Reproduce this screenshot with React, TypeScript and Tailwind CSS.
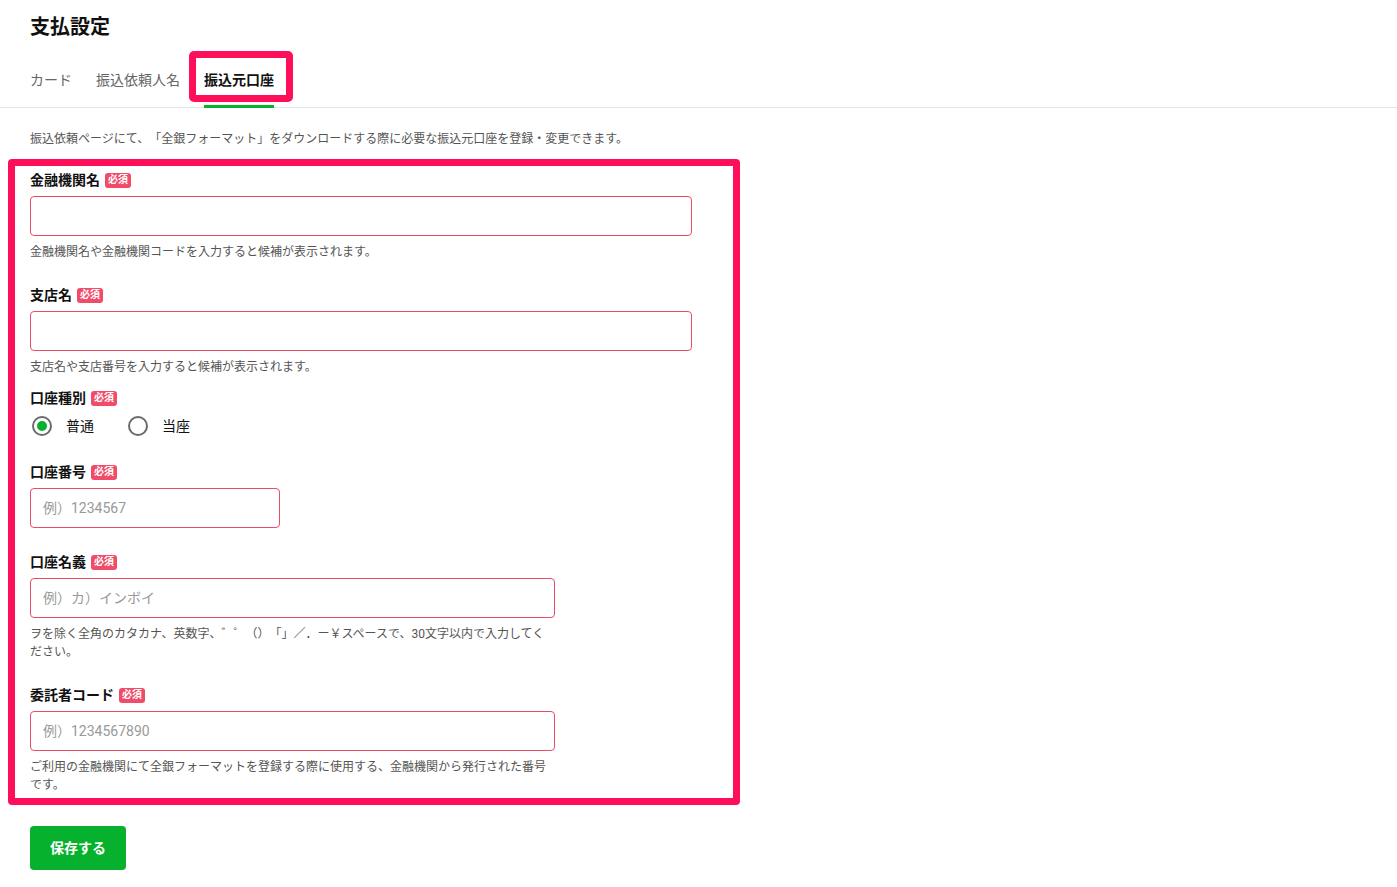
// Payment settings — bank account (振込元口座) tab.
// The two pink frames are review annotations from the screenshot, kept as-is.
import type { ReactNode } from "react";
import { useState } from "react";

const FONT = "font-['Roboto','Noto_Sans_CJK_JP',sans-serif] [text-spacing-trim:space-all]";

function Required(): ReactNode {
  return (
    <span className="inline-flex h-[15px] items-center rounded-[3px] bg-[#f04b68] px-[3px] text-[10px] font-bold leading-none text-white">
      必須
    </span>
  );
}

function FieldLabel({ children }: { children: ReactNode }): ReactNode {
  return (
    <div className="flex h-5 items-center gap-[5px]">
      <span className="text-sm font-bold leading-5 text-[#111]">{children}</span>
      <Required />
    </div>
  );
}

function TextInput({
  placeholder,
  width,
}: {
  placeholder?: string;
  width: string;
}): ReactNode {
  return (
    <input
      type="text"
      placeholder={placeholder}
      className={`mt-[6px] h-10 ${width} rounded-[4px] border border-[#ec4b66] bg-white px-3 text-sm text-[#111] outline-none placeholder:text-[#999]`}
    />
  );
}

function Help({ children, width }: { children: ReactNode; width?: string }): ReactNode {
  return (
    <p className={`mt-[7px] text-xs leading-[18px] text-[#555] ${width ?? ""}`}>
      {children}
    </p>
  );
}

function Radio({
  label,
  checked,
  onSelect,
}: {
  label: string;
  checked: boolean;
  onSelect: () => void;
}): ReactNode {
  return (
    <label className="flex cursor-pointer items-center gap-[14px]" onClick={onSelect}>
      <span className="ml-[2px] flex h-5 w-5 items-center justify-center rounded-full border-2 border-[#6b6b6b]">
        {checked ? <span className="h-[10px] w-[10px] rounded-full bg-[#06b22d]" /> : null}
      </span>
      <span className="text-sm leading-6 text-[#111]">{label}</span>
    </label>
  );
}

export default function App(): ReactNode {
  const [kind, setKind] = useState<"futsu" | "toza">("futsu");

  return (
    <div className={`min-h-screen bg-white ${FONT}`}>
      <h1 className="px-[30px] pt-[13px] text-xl font-bold leading-7 text-[#111]">支払設定</h1>

      <nav className="mt-[29px] flex gap-6 border-b border-[#e5e5e5] px-[30px]">
        <span className="-mb-px border-b-[3px] border-transparent pb-[15px] text-sm leading-5 text-[#666]">
          カード
        </span>
        <span className="-mb-px border-b-[3px] border-transparent pb-[15px] text-sm leading-5 text-[#666]">
          振込依頼人名
        </span>
        <span className="relative -mb-px border-b-[3px] border-[#06b22d] pb-[15px] text-sm font-bold leading-5 text-[#111]">
          振込元口座
          <span className="pointer-events-none absolute -top-[19px] -left-[15px] h-[51px] w-[104px] rounded-[5px] border-[7px] border-[#ff0f5a]" />
        </span>
      </nav>

      <p className="mt-[22px] px-[30px] text-xs leading-[18px] text-[#555]">
        振込依頼ページにて、「全銀フォーマット」をダウンロードする際に必要な振込元口座を登録・変更できます。
      </p>

      <section className="mt-[11px] ml-2 flex w-[732px] flex-col rounded-[4px] border-[7px] border-[#ff0f5a] pt-1 pr-4 pb-1 pl-[15px]">
        <FieldLabel>金融機関名</FieldLabel>
        <TextInput width="w-[662px]" />
        <Help>金融機関名や金融機関コードを入力すると候補が表示されます。</Help>

        <div className="mt-[24px]">
          <FieldLabel>支店名</FieldLabel>
        </div>
        <TextInput width="w-[662px]" />
        <Help>支店名や支店番号を入力すると候補が表示されます。</Help>

        <div className="mt-[12px]">
          <FieldLabel>口座種別</FieldLabel>
        </div>
        <div className="mt-[6px] flex h-6 items-center gap-8">
          <Radio label="普通" checked={kind === "futsu"} onSelect={() => setKind("futsu")} />
          <Radio label="当座" checked={kind === "toza"} onSelect={() => setKind("toza")} />
        </div>

        <div className="mt-6">
          <FieldLabel>口座番号</FieldLabel>
        </div>
        <TextInput width="w-[250px]" placeholder="例）1234567" />

        <div className="mt-6">
          <FieldLabel>口座名義</FieldLabel>
        </div>
        <TextInput width="w-[525px]" placeholder="例）カ）インボイ" />
        <Help width="w-[525px]">
          ヲを除く全角のカタカナ、英数字、゛゜（）「」／．ー￥スペースで、30文字以内で入力してください。
        </Help>

        <div className="mt-[24px]">
          <FieldLabel>委託者コード</FieldLabel>
        </div>
        <TextInput width="w-[525px]" placeholder="例）1234567890" />
        <Help width="w-[525px]">
          ご利用の金融機関にて全銀フォーマットを登録する際に使用する、金融機関から発行された番号です。
        </Help>
      </section>

      <div className="mt-[21px] px-[30px] pb-4">
        <button
          type="button"
          className="h-11 w-24 rounded-[4px] bg-[#06b22d] text-sm font-bold text-white"
        >
          保存する
        </button>
      </div>
    </div>
  );
}
